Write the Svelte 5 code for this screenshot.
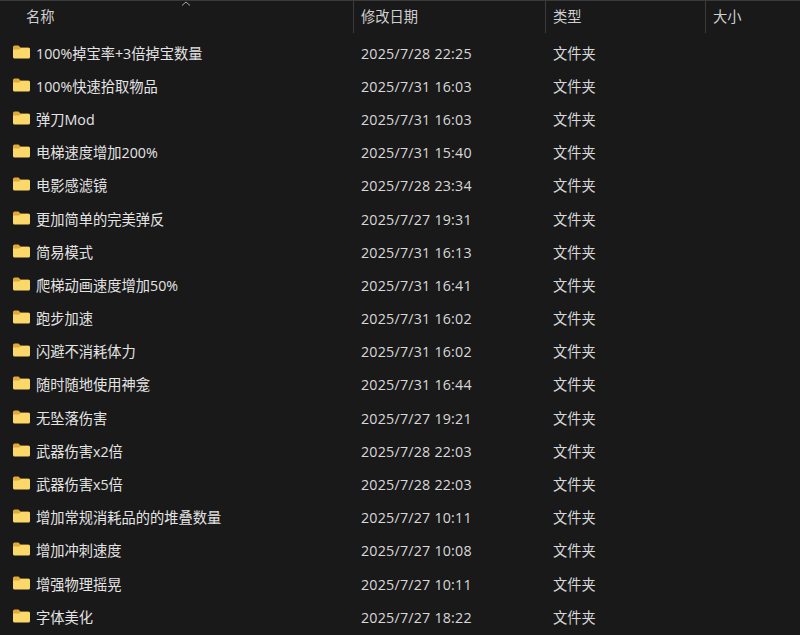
<script lang="ts">
	// Explorer detail view: folder name, modified date, type, size
	const folders = [
		['100%掉宝率+3倍掉宝数量', '2025/7/28 22:25'],
		['100%快速拾取物品', '2025/7/31 16:03'],
		['弹刀Mod', '2025/7/31 16:03'],
		['电梯速度增加200%', '2025/7/31 15:40'],
		['电影感滤镜', '2025/7/28 23:34'],
		['更加简单的完美弹反', '2025/7/27 19:31'],
		['简易模式', '2025/7/31 16:13'],
		['爬梯动画速度增加50%', '2025/7/31 16:41'],
		['跑步加速', '2025/7/31 16:02'],
		['闪避不消耗体力', '2025/7/31 16:02'],
		['随时随地使用神龛', '2025/7/31 16:44'],
		['无坠落伤害', '2025/7/27 19:21'],
		['武器伤害x2倍', '2025/7/28 22:03'],
		['武器伤害x5倍', '2025/7/28 22:03'],
		['增加常规消耗品的的堆叠数量', '2025/7/27 10:11'],
		['增加冲刺速度', '2025/7/27 10:08'],
		['增强物理摇晃', '2025/7/27 10:11'],
		['字体美化', '2025/7/27 18:22']
	];
</script>

<div class="explorer">
	<div class="header">
		<div class="col name">
			名称
			<svg class="sort" viewBox="0 0 10 5" width="10" height="5" aria-hidden="true">
				<path d="M1 4.5 L5 1 L9 4.5" />
			</svg>
		</div>
		<div class="col date">修改日期</div>
		<div class="col type">类型</div>
		<div class="col size">大小</div>
	</div>

	<div class="rows">
		{#each folders as [name, date]}
			<div class="row">
				<div class="cell name">
					<svg class="folder" viewBox="0 0 17 14" width="17" height="14" aria-hidden="true">
						<path class="back" d="M0 2 Q0 0.5 1.5 0.5 H5.5 L7.5 2.5 H15.5 Q17 2.5 17 4 V6 H0 Z" />
						<path class="front" d="M0 4.5 H6 L8 3 H15.5 Q17 3 17 4.5 V12 Q17 13.5 15.5 13.5 H1.5 Q0 13.5 0 12 Z" />
					</svg>
					<span>{name}</span>
				</div>
				<div class="cell date">{date}</div>
				<div class="cell type">文件夹</div>
			</div>
		{/each}
	</div>
</div>

<style>
	:global(body) {
		background: #191919;
	}

	.explorer {
		height: 635px;
		overflow: hidden;
		background: #191919;
		color: #e4e4e4;
		font-family: 'Open Sans', 'Noto Sans CJK SC', sans-serif;
		font-size: 14.25px;
		line-height: 20px;
	}

	.header {
		display: grid;
		grid-template-columns: 353px 192px 160px 95px;
		height: 32px;
		border-top: 1px solid #3a3a3a;
		color: #cfcfcf;
	}

	.col {
		display: flex;
		align-items: center;
		padding-left: 7px;
		border-left: 1px solid #3c3c3c;
	}

	.col.name {
		position: relative;
		padding-left: 26px;
		border-left: none;
	}

	.sort {
		position: absolute;
		left: 181px;
		top: 0;
		fill: none;
		stroke: #a8a8a8;
		stroke-width: 1;
	}

	.rows {
		padding-top: 4px;
	}

	.row {
		display: grid;
		grid-template-columns: 353px 192px 160px 95px;
		align-items: center;
		height: 33.2px;
	}

	.cell.name {
		display: flex;
		align-items: center;
		gap: 6px;
		padding-left: 13px;
	}

	.cell.date,
	.cell.type {
		padding-left: 8px;
		color: #d8d8d8;
	}

	.cell.date {
		letter-spacing: 0.22px;
	}

	.folder {
		flex-shrink: 0;
		margin-top: -4px;
	}

	.back {
		fill: #e0a93a;
	}

	.front {
		fill: #fbd869;
	}
</style>
